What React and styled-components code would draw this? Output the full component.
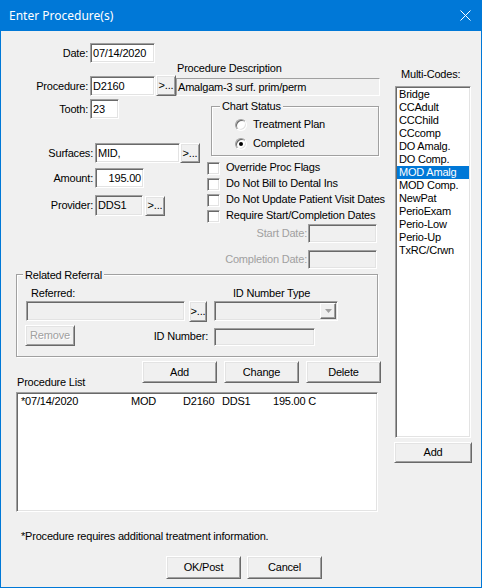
import React from "react";
import styled, { createGlobalStyle } from "styled-components";

const GlobalStyle = createGlobalStyle`
  html, body { margin: 0; padding: 0; background: #ffffff; }
  *, *::before, *::after { box-sizing: border-box; }
`;

const Window = styled.div`
  width: 482px;
  height: 588px;
  background: #0078d7;
  padding: 0 1px 1px;
  display: flex;
  flex-direction: column;
  overflow: hidden;
`;

const TitleBar = styled.div`
  height: 31px;
  flex: none;
  display: flex;
  align-items: center;
  padding: 0 10px 0 8px;
  color: #ffffff;
  font-family: "Noto Sans", "DejaVu Sans", sans-serif;
  font-size: 12px;
`;

const Title = styled.span`
  flex: 1;
`;

const Client = styled.div`
  flex: 1;
  background: #f0f0f0;
  color: #000000;
  font-family: "Liberation Sans", Arial, sans-serif;
  font-size: 11px;
  line-height: 13px;
  letter-spacing: -0.2px;
  display: flex;
  flex-direction: column;
`;

const Main = styled.div`
  display: flex;
  height: 481px;
  flex: none;
`;

const LeftCol = styled.div`
  width: 380px;
  flex: none;
  padding-top: 12px;
  display: flex;
  flex-direction: column;
`;

const RightCol = styled.div`
  flex: 1;
  padding-top: 37px;
  display: flex;
  flex-direction: column;
  align-items: flex-start;
`;

const Row = styled.div`
  display: flex;
  flex: none;
  align-items: ${(p) => p.$align || "center"};
  justify-content: ${(p) => p.$justify || "flex-start"};
  height: ${(p) => (p.$h ? `${p.$h}px` : "auto")};
  margin-top: ${(p) => p.$mt || 0}px;
  margin-left: ${(p) => p.$ml || 0}px;
  padding-right: ${(p) => p.$pr || 0}px;
`;

const FieldLabel = styled.span`
  flex: none;
  width: ${(p) => (p.$w ? `${p.$w}px` : "auto")};
  margin-right: ${(p) => (p.$gap ?? 2)}px;
  margin-bottom: ${(p) => p.$mb || 0}px;
  text-align: right;
  white-space: nowrap;
  color: ${(p) => (p.$disabled ? "#a0a0a0" : "#000000")};
`;

const PlainLabel = styled.span`
  flex: none;
  width: ${(p) => (p.$w ? `${p.$w}px` : "auto")};
  margin-left: ${(p) => p.$ml || 0}px;
  white-space: nowrap;
`;

const Edit = styled.div`
  flex: none;
  width: ${(p) => p.$w}px;
  height: ${(p) => p.$h || 20}px;
  align-self: ${(p) => p.$self || "auto"};
  background: ${(p) => (p.$gray ? "#f0f0f0" : "#ffffff")};
  border: 1px solid;
  border-color: #a0a0a0 #ffffff #ffffff #a0a0a0;
  box-shadow: inset 1px 1px 0 #696969, inset -1px -1px 0 #e3e3e3;
  padding: 0 2px;
  display: flex;
  align-items: center;
  justify-content: ${(p) => (p.$right ? "flex-end" : "flex-start")};
  white-space: nowrap;
  overflow: hidden;
`;

const Combo = styled(Edit)`
  padding: 1px;
  justify-content: flex-end;
`;

const DropButton = styled.span`
  width: 16px;
  height: 16px;
  background: #f0f0f0;
  border: 1px solid;
  border-color: #ffffff #696969 #696969 #ffffff;
  box-shadow: inset -1px -1px 0 #a0a0a0;
  display: flex;
  align-items: center;
  justify-content: center;
`;

const PushButton = styled.button`
  flex: none;
  width: ${(p) => p.$w}px;
  height: ${(p) => p.$h || 22}px;
  margin-left: ${(p) => p.$ml || 0}px;
  margin-top: ${(p) => p.$mt || 0}px;
  background: #f0f0f0;
  border: 1px solid;
  border-color: #ffffff #696969 #696969 #ffffff;
  box-shadow: inset 1px 1px 0 #e3e3e3, inset -1px -1px 0 #a0a0a0;
  font: inherit;
  letter-spacing: inherit;
  color: ${(p) => (p.$disabled ? "#a0a0a0" : "#000000")};
  text-shadow: ${(p) => (p.$disabled ? "1px 1px 0 #ffffff" : "none")};
  padding: 0;
  display: flex;
  align-items: center;
  justify-content: center;
  cursor: default;
`;

const DescColumn = styled.div`
  display: flex;
  flex-direction: column;
  width: 204px;
`;

const DescLabel = styled.span`
  margin: 0 0 3px 1px;
  white-space: nowrap;
`;

const StaticBox = styled.div`
  height: 18px;
  background: #f0f0f0;
  border: 1px solid;
  border-color: #a0a0a0 #ffffff #ffffff #a0a0a0;
  padding: 0 1px;
  display: flex;
  align-items: center;
  white-space: nowrap;
`;

const Middle = styled.div`
  display: flex;
  margin-top: 3px;
  flex: none;
`;

const SubCol = styled.div`
  display: flex;
  flex-direction: column;
  width: ${(p) => p.$w}px;
  flex: none;
`;

const GroupBox = styled.div`
  position: relative;
  flex: none;
  width: ${(p) => p.$w}px;
  height: ${(p) => p.$h}px;
  margin: ${(p) => p.$m};
  padding: ${(p) => p.$pad};
  border: 1px solid #a0a0a0;
  box-shadow: inset 1px 1px 0 #ffffff, 1px 1px 0 #ffffff;
  display: flex;
  flex-direction: column;
`;

const GroupLegend = styled.span`
  position: absolute;
  top: ${(p) => p.$top}px;
  left: ${(p) => p.$left}px;
  padding: 0 2px;
  background: #f0f0f0;
  white-space: nowrap;
`;

const RadioRow = styled.div`
  display: flex;
  align-items: center;
  height: 19px;
`;

const RadioMark = styled.span`
  flex: none;
  width: 12px;
  height: 12px;
  border-radius: 50%;
  border: 1px solid;
  border-color: #a0a0a0 #ffffff #ffffff #a0a0a0;
  box-shadow: inset 1px 1px 0 #696969, inset -1px -1px 0 #e3e3e3;
  background: #ffffff;
  margin-right: 6px;
  display: flex;
  align-items: center;
  justify-content: center;
  &::after {
    content: "";
    width: 4px;
    height: 4px;
    border-radius: 50%;
    background: #000000;
    display: ${(p) => (p.$checked ? "block" : "none")};
  }
`;

const CheckList = styled.div`
  display: flex;
  flex-direction: column;
  margin-top: 5px;
`;

const CheckRow = styled.div`
  display: flex;
  align-items: flex-start;
  height: 16px;
  white-space: nowrap;
`;

const CheckMark = styled.span`
  flex: none;
  width: 13px;
  height: 13px;
  margin: 1px 6px 0 0;
  background: #ffffff;
  border: 1px solid;
  border-color: #a0a0a0 #ffffff #ffffff #a0a0a0;
  box-shadow: inset 1px 1px 0 #696969, inset -1px -1px 0 #e3e3e3;
`;

const ButtonGroup = styled.div`
  display: flex;
  margin-left: auto;
`;

const ListBox = styled.div`
  flex: none;
  width: ${(p) => p.$w}px;
  height: ${(p) => p.$h}px;
  margin: ${(p) => p.$m};
  padding: ${(p) => p.$pad};
  background: #ffffff;
  border: 1px solid;
  border-color: #a0a0a0 #ffffff #ffffff #a0a0a0;
  box-shadow: inset 1px 1px 0 #696969, inset -1px -1px 0 #e3e3e3;
  overflow: hidden;
`;

const ProcRow = styled.div`
  display: grid;
  grid-template-columns: 110px 52px 39px 51px auto;
  white-space: pre;
`;

const CodeItem = styled.div`
  height: 13px;
  padding-left: 2px;
  white-space: nowrap;
  background: ${(p) => (p.$selected ? "#0078d7" : "transparent")};
  color: ${(p) => (p.$selected ? "#ffffff" : "#000000")};
`;

const Footnote = styled.div`
  margin: 18px 0 0 20px;
  white-space: nowrap;
`;

const BottomBar = styled.div`
  display: flex;
  margin-top: 13px;
  padding-left: 165px;
`;

const CloseIcon = () => (
  <svg width="11" height="11" viewBox="0 0 11 11">
    <path d="M0.5 0.5 L10.5 10.5 M10.5 0.5 L0.5 10.5" stroke="#ffffff" strokeWidth="1" fill="none" />
  </svg>
);

const DownArrow = () => (
  <svg width="7" height="4" viewBox="0 0 7 4">
    <polygon points="0,0 7,0 3.5,4" fill="#a0a0a0" />
  </svg>
);

const multiCodes = [
  "Bridge",
  "CCAdult",
  "CCChild",
  "CCcomp",
  "DO Amalg.",
  "DO Comp.",
  "MOD Amalg",
  "MOD Comp.",
  "NewPat",
  "PerioExam",
  "Perio-Low",
  "Perio-Up",
  "TxRC/Crwn",
];

const checks = [
  "Override Proc Flags",
  "Do Not Bill to Dental Ins",
  "Do Not Update Patient Visit Dates",
  "Require Start/Completion Dates",
];

export default function App() {
  return (
    <>
      <GlobalStyle />
      <Window>
        <TitleBar>
          <Title>Enter Procedure(s)</Title>
          <CloseIcon />
        </TitleBar>
        <Client>
          <Main>
            <LeftCol>
              <Row $h={20}>
                <FieldLabel $w={87}>Date:</FieldLabel>
                <Edit $w={65}>07/14/2020</Edit>
              </Row>
              <Row $align="flex-end" $mt={-1}>
                <FieldLabel $w={87} style={{ lineHeight: "20px" }}>Procedure:</FieldLabel>
                <Edit $w={65}>D2160</Edit>
                <PushButton $w={20} $h={21} $ml={1}>&gt;...</PushButton>
                <DescColumn>
                  <DescLabel>Procedure Description</DescLabel>
                  <StaticBox>Amalgam-3 surf. prim/perm</StaticBox>
                </DescColumn>
              </Row>
              <Middle>
                <SubCol $w={206}>
                  <Row $h={20}>
                    <FieldLabel $w={87}>Tooth:</FieldLabel>
                    <Edit $w={29}>23</Edit>
                  </Row>
                  <Row $h={20} $mt={24}>
                    <FieldLabel $w={92}>Surfaces:</FieldLabel>
                    <Edit $w={85}>MID,</Edit>
                    <PushButton $w={20} $h={20}>&gt;...</PushButton>
                  </Row>
                  <Row $h={20} $mt={5}>
                    <FieldLabel $w={92}>Amount:</FieldLabel>
                    <Edit $w={49} $right>195.00</Edit>
                  </Row>
                  <Row $h={21} $mt={7}>
                    <FieldLabel $w={92}>Provider:</FieldLabel>
                    <Edit $w={48} $h={21} $gray>DDS1</Edit>
                    <PushButton $w={20} $h={20} $ml={2}>&gt;...</PushButton>
                  </Row>
                </SubCol>
                <SubCol $w={174}>
                  <GroupBox $w={168} $h={50} $m="7px 0 0 4px" $pad="8px 0 0 23px">
                    <GroupLegend $top={-7} $left={8}>Chart Status</GroupLegend>
                    <RadioRow>
                      <RadioMark />
                      Treatment Plan
                    </RadioRow>
                    <RadioRow>
                      <RadioMark $checked />
                      Completed
                    </RadioRow>
                  </GroupBox>
                  <CheckList>
                    {checks.map((c) => (
                      <CheckRow key={c}>
                        <CheckMark />
                        {c}
                      </CheckRow>
                    ))}
                  </CheckList>
                  <Row $h={19} $mt={-1} $justify="flex-end" $pr={4}>
                    <FieldLabel $gap={1} $disabled>Start Date:</FieldLabel>
                    <Edit $w={69} $h={19} $gray />
                  </Row>
                  <Row $h={19} $mt={7} $justify="flex-end" $pr={4}>
                    <FieldLabel $gap={1} $disabled>Completion Date:</FieldLabel>
                    <Edit $w={69} $h={19} $gray />
                  </Row>
                </SubCol>
              </Middle>
              <GroupBox $w={362} $h={83} $m="5px 0 0 15px" $pad="12px 0 0 9px">
                <GroupLegend $top={-6} $left={6}>Related Referral</GroupLegend>
                <Row $h={13}>
                  <PlainLabel $w={202} $ml={5}>Referred:</PlainLabel>
                  <PlainLabel>ID Number Type</PlainLabel>
                </Row>
                <Row $align="flex-start" $mt={1}>
                  <Edit $w={159} $gray />
                  <PushButton $w={18} $h={21} $ml={4}>&gt;...</PushButton>
                  <Combo $w={124} $gray style={{ marginLeft: 7 }}>
                    <DropButton>
                      <DownArrow />
                    </DropButton>
                  </Combo>
                </Row>
                <Row $align="flex-end" $mt={3}>
                  <PushButton $w={50} $h={21} $ml={-1} $disabled>Remove</PushButton>
                  <FieldLabel $w={133} $gap={6} $mb={3}>ID Number:</FieldLabel>
                  <Edit $w={101} $h={18} $gray />
                </Row>
              </GroupBox>
              <Row $align="flex-start" $h={28} $mt={4}>
                <PlainLabel $ml={16} style={{ marginTop: 15 }}>Procedure List</PlainLabel>
                <ButtonGroup>
                  <PushButton $w={75}>Add</PushButton>
                  <PushButton $w={75} $ml={7}>Change</PushButton>
                  <PushButton $w={75} $ml={7}>Delete</PushButton>
                </ButtonGroup>
              </Row>
              <ListBox $w={362} $h={120} $m="3px 0 0 15px" $pad="2px 0 0 4px">
                <ProcRow>
                  <span>*07/14/2020</span>
                  <span>MOD</span>
                  <span>D2160</span>
                  <span>DDS1</span>
                  <span>195.00 C</span>
                </ProcRow>
              </ListBox>
            </LeftCol>
            <RightCol>
              <PlainLabel $ml={20}>Multi-Codes:</PlainLabel>
              <ListBox $w={76} $h={352} $m="5px 0 0 14px" $pad="1px">
                {multiCodes.map((c) => (
                  <CodeItem key={c} $selected={c === "MOD Amalg"}>
                    {c}
                  </CodeItem>
                ))}
              </ListBox>
              <PushButton $w={78} $h={21} $ml={13} $mt={4}>Add</PushButton>
            </RightCol>
          </Main>
          <Footnote>*Procedure requires additional treatment information.</Footnote>
          <BottomBar>
            <PushButton $w={75} $h={23}>OK/Post</PushButton>
            <PushButton $w={75} $h={23} $ml={6}>Cancel</PushButton>
          </BottomBar>
        </Client>
      </Window>
    </>
  );
}
